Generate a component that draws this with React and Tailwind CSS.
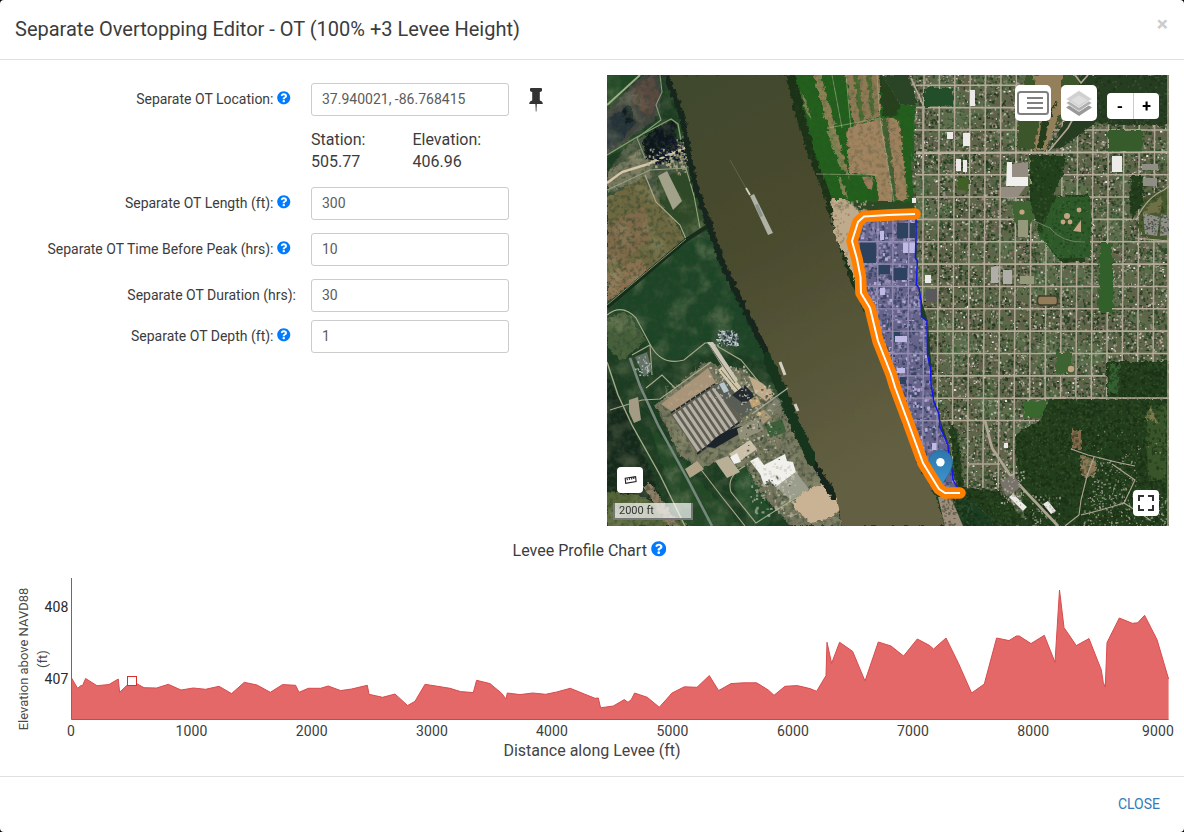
import React from "react";
import { FaQuestionCircle } from "react-icons/fa";

/* ---------- deterministic random numbers for the aerial imagery ---------- */
function makeRandom(seed) {
  let s = seed * 7919;
  return () => {
    s = (s * 1664525 + 1013904223) % 4294967296;
    return s / 4294967296;
  };
}

/* Scatter small rectangles inside a box and merge them into one path. */
function scatter(seed, count, x0, y0, w, h, min, max) {
  const rnd = makeRandom(seed);
  let d = "";
  for (let i = 0; i < count; i++) {
    const x = (x0 + rnd() * w).toFixed(1);
    const y = (y0 + rnd() * h).toFixed(1);
    const a = (min + rnd() * (max - min)).toFixed(1);
    const b = (min + rnd() * (max - min)).toFixed(1);
    d += `M${x} ${y}h${a}v${b}h-${a}z`;
  }
  return d;
}

const CITY = [
  ["#2b4425", 5600, 11, 1, 3.6],
  ["#43603a", 2600, 12, 1, 3],
  ["#625a50", 2600, 13, 1, 2.8],
  ["#978c80", 3600, 14, 0.8, 2.5],
  ["#bbb2a7", 2100, 15, 0.8, 2.2],
  ["#22321c", 2100, 16, 0.8, 2.4],
  ["#e9e7e4", 650, 17, 0.8, 2],
  ["#98584c", 160, 18, 0.8, 1.8],
];

const WOOD = [
  ["#152611", 2000, 31, 1, 3.5],
  ["#365629", 1600, 32, 1, 2.6],
  ["#4b6234", 600, 33, 1, 2],
];

const V_STREETS = Array.from({ length: 17 }, (_, i) => 923 + i * 15.4);
const H_STREETS = Array.from({ length: 16 }, (_, i) => 85.3 + i * 22.35);

const LEVEE = "M915 214L888 215L864 216.5L858 222L852 241L857 259L860.5 277L861 293L870 308L878 341L891 374L895 387L908 422L923 463L939 489L945 493L960 493";
const ZONE = "M915 214L888 215L864 216.5L852 241L861 293L870 308L878 341L891 374L895 387L908 422L923 463L941 492L957 489L956 482L953 475L950 463L949 445L942 432L939 415L934 405L932 378L928 355L928 322L922 317L921 300L917 285L918 268L915 258L916 236z";
const BLUE = "M916 218L916 236L915.3 258L917.5 261L917 268L916.5 285L919 288L921 300L921.5 317L927 321L927.5 355L930.5 368L931 384L934 402L939 414L940 427L948 445L949 462L952 470L953 480L957 487";
const RIVER = "M668 75L684 115L688 145L697 185L712 228L724 262L745 306L767 350L786 395L802 433L822 475L838 503L842 526L945 526L936 498L920 466L905 425L888 380L873 330L860 302L850 280L840 250L831 222L822 190L808 155L797 123L786 75z";

const PLANT_ROWS = Array.from({ length: 9 }, (_, i) => {
  const t = i / 8;
  const x = 674 + t * 39;
  const y = 414 - t * 26;
  return `M${x.toFixed(1)} ${y.toFixed(1)}l25 37`;
}).join("");

function AerialMap() {
  return (
    <svg className="block h-full w-full" viewBox="607 75 562 451">
      <defs>
        <filter id="rough" x="0" y="0" width="1" height="1">
          <feTurbulence type="fractalNoise" baseFrequency="0.2" numOctaves="3" seed="4" result="n" />
          <feDisplacementMap in="SourceGraphic" in2="n" scale="6" xChannelSelector="R" yChannelSelector="G" />
        </filter>
        <filter id="grain" x="0" y="0" width="1" height="1">
          <feTurbulence type="fractalNoise" baseFrequency="0.22" numOctaves="3" seed="9" />
          <feColorMatrix values="0 0 0 0 0.03  0 0 0 0 0.06  0 0 0 0 0.03  0 3 0 0 -1.35" />
        </filter>
        <filter id="patch" x="0" y="0" width="1" height="1">
          <feTurbulence type="fractalNoise" baseFrequency="0.045" numOctaves="4" seed="21" />
          <feColorMatrix values="0 0 0 0 0.4  0 0 0 0 0.4  0 0 0 0 0.23  0 3 0 0 -1.4" />
        </filter>
        <filter id="tint" x="0" y="0" width="1" height="1">
          <feTurbulence type="fractalNoise" baseFrequency="0.03" numOctaves="3" seed="3" />
          <feColorMatrix values="0 0 0 0 0.11  0 0 0 0 0.22  0 0 0 0 0.09  3.4 0 0 0 -1.6" />
        </filter>
        <filter id="soften"><feGaussianBlur stdDeviation="0.35" /></filter>
        <linearGradient id="river" x1="0" y1="0" x2="0.35" y2="1">
          <stop offset="0" stopColor="#3f482e" />
          <stop offset="0.45" stopColor="#4b4b2f" />
          <stop offset="1" stopColor="#625f42" />
        </linearGradient>
        <linearGradient id="pin" x1="0" y1="0" x2="0" y2="1">
          <stop offset="0" stopColor="#2e77ac" />
          <stop offset="1" stopColor="#3f97d2" />
        </linearGradient>
        <clipPath id="city"><path d="M882 75H1169V526H1000L958 489L949 445L934 402L928 322L917 285L916 214L914 205L911 160L915 106L900 104z" /></clipPath>
        <clipPath id="zone"><path d={ZONE} /></clipPath>
        <clipPath id="woods"><path d="M950 425L958 430L966 488L995 490L1016 475L1014 440L1024 420L1046 410L1060 398L1100 398L1108 362L1169 362V526H945z" /></clipPath>
        <clipPath id="park"><path d="M1030 155L1066 155L1063 175L1053 196L1090 195V238L1085 262H1060L1042 238L1030 205zM1080 75H1169V128H1115L1085 118zM1135 160H1169V240H1137L1130 200z" /></clipPath>
      </defs>

      {/* west bank */}
      <g filter="url(#rough)">
        <rect x="600" y="70" width="576" height="462" fill="#1d3d22" />
        <path d="M607 75H640L607 105z" fill="#1d4823" />
        <path d="M607 112L642 75H660L662 100L655 120L607 156z" fill="#42443f" />
        <path d="M632 88L652 75L660 95L650 118L634 105z" fill="#5a4940" />
        <path d="M607 118L630 105L636 122L618 146L607 150z" fill="#28323a" />
        <path d="M622 108L631 106L634 120L627 125z" fill="#111a23" />
        <path d="M607 172L630 142L645 135L690 145L700 200L650 200L607 190z" fill="#4b5942" />
        <path d="M607 172L640 150L652 165L650 178L607 192z" fill="#77785e" />
        <path d="M643 140L658 126L675 120L678 147L660 164L646 158z" fill="#10141f" />
        <path d="M607 198L642 178L660 202L686 238L640 285L607 305z" fill="#6d673f" />
        <path d="M607 225L645 205L650 240L625 262L607 265z" fill="#7f6b49" />
        <path d="M607 275L640 258L648 270L620 300L607 305z" fill="#8a704f" />
        <path d="M656 178L694 170L712 226L688 240L662 206z" fill="#2e4828" />
        <path d="M688 240L712 229L745 304L770 362L720 352L664 362L640 340L607 303z" fill="#1a4425" />
        <path d="M607 318L625 310L646 340L620 362L607 345z" fill="#46613a" />
        <path d="M655 405L704 362L745 370L778 400L800 440L835 500L842 526H790L750 480L722 460L700 470L680 455z" fill="#77775e" />
        <path d="M607 375L630 420L672 526H607z" fill="#13291a" />
        <path d="M650 425L690 470L740 526H680z" fill="#214a26" />
        <path d="M607 492L640 495L690 526H607z" fill="#566637" />
        <path d="M648 480L680 526H668L644 488z" fill="#8b7c63" />
        <path d="M736 468L745 466L772 513L768 526H755L735 495z" fill="#214e29" />
      </g>
      <rect x="607" y="75" width="235" height="451" filter="url(#patch)" opacity="0.3" />
      <rect x="607" y="75" width="235" height="451" filter="url(#grain)" opacity="0.6" />

      {/* tracks on the west bank */}
      <g fill="none" stroke="#a9aa8b" strokeWidth="1.1">
        <path d="M607 105L640 75" stroke="#9eb086" strokeWidth="2" />
        <path d="M607 155L637 137L671 119L678 124L681 140" stroke="#7fa06c" strokeWidth="1.4" />
        <path d="M607 183L622 172L645 165L690 146" stroke="#d5c8a8" strokeWidth="2.4" />
        <path d="M607 190L650 170L686 168L694 196L700 228" stroke="#93a37d" />
        <path d="M660 75L662 92L656 105L661 120L637 138L645 158" stroke="#88997a" />
        <path d="M645 175L656 202L680 225L686 239" />
        <path d="M708 226L686 240L607 307" stroke="#172c1b" strokeWidth="4" />
        <path d="M686 239L607 305" stroke="#8d9a72" strokeWidth="0.9" />
        <path d="M607 315Q622 303 636 318L651 346Q662 366 684 360L705 343L712 343L741 360L772 398" />
        <path d="M607 362L618 395L632 425L660 475L685 526" strokeWidth="1.4" />
        <path d="M630 358L640 386L658 425L687 478L712 526" stroke="#76877c" strokeWidth="2.6" />
        <path d="M610 410L642 400L660 399L711 362M646 388L662 375L675 388M632 355L650 345L652 375" />
        <path d="M696 463L722 497L745 526M745 466Q726 476 731 492L756 523L808 490" />
      </g>

      {/* smelter, warehouses and their yards */}
      <g>
        <path d="M661 404L708 368L716 383L674 413z" fill="#a89478" />
        <path d={scatter(50, 70, 664, 383, 44, 22, 0.8, 3)} fill="#c2b295" opacity="0.35" />
        <path d="M671 415L715 384L742 420L699 455z" fill="#615e52" />
        <path d={PLANT_ROWS} stroke="#b5b0a5" strokeWidth="3.2" />
        <path d="M671 413L715 384M697 454L741 421" stroke="#202b2d" strokeWidth="1.8" strokeDasharray="5 1" />
        <path d="M712 386L733 378L748 394L758 405L742 418z" fill="#585e56" />
        <path d="M707 342L713 342L738 380L733 384z" fill="#c9c6b6" />
        <path d="M718 370L724 365L742 388L735 393z" fill="#d2c7a9" />
        <path d="M709 345L735 383M721 370L738 390" stroke="#68675b" />
        <path d="M745 385L755 396L744 404L732 395z" fill="#232b31" />
        <path d="M719 384L724 382L729 391L724 393z" fill="#b7c6ca" />
        <path d="M707 447Q717 432 742 426L741 433L715 448z" fill="#1b242a" />
        <path d="M737 429L757 418L764 430L740 440z" fill="#928f79" />
        <path d="M729 454L750 440L757 449L737 463z" fill="#ccc0aa" />
        <path d="M730 457L737 453L741 462L734 464z" fill="#f0f0ee" />
        <path d="M750 461L758 457L764 465L785 454L787 461L793 462L796 472L776 487L770 481L764 485L760 474z" fill="#f0f0ec" />
        <path d="M776 487L796 472L809 489L791 500z" fill="#9b9e8d" />
        <path d="M749 376L762 383L775 394L766 401L755 393z" fill="#c0aa8a" />
        <path d="M756 414L764 410L771 417L763 424zM749 400L757 396L761 404L752 408z" fill="#c0a173" />
        <path d="M715 461L728 456L740 472L727 478z" fill="#b9af97" />
        <path d="M685 469L697 461L704 469L690 478z" fill="#b0a388" />
        <path d="M765 425L782 419L786 432L770 438z" fill="#3d603a" />
        <path d="M718 333L728 330L739 337L737 347L724 344z" fill="#70807e" />
        <path d="M635 357L647 352L652 371L644 377z" fill="#647268" />
        <path d="M629 400L638 397L641 420L634 423L629 412z" fill="#a39b83" />
        <path d="M658 176L667 171L682 201L673 210z" fill="#a2a18a" />
        <path d="M752 424L782 392L788 396L759 430z" fill="#8c8d7b" opacity="0.5" />
        <path d="M793 503L803 492L822 484L836 496L840 510L830 518L812 523L797 513z" fill="#c9b394" filter="url(#rough)" />
        <g filter="url(#soften)">
          <path d={scatter(51, 110, 750, 465, 45, 50, 1, 3)} fill="#cbc6b4" opacity="0.6" />
          <path d={scatter(52, 110, 740, 385, 35, 80, 0.8, 2.5)} fill="#d0c8b4" opacity="0.7" />
          <path d={scatter(53, 80, 745, 385, 45, 100, 0.8, 2.6)} fill="#2b3b30" opacity="0.7" />
          <path d={scatter(57, 60, 708, 365, 42, 35, 0.8, 2.4)} fill="#d0cab9" opacity="0.7" />
          <path d={scatter(54, 70, 716, 330, 21, 15, 0.8, 2.4)} fill="#c3cdcb" />
          <path d={scatter(58, 50, 716, 330, 22, 15, 0.8, 2.4)} fill="#25373a" />
          <path d={scatter(55, 90, 647, 148, 42, 18, 0.8, 3)} fill="#c0b99f" opacity="0.8" />
          <path d={scatter(56, 80, 655, 138, 30, 24, 0.8, 3)} fill="#11182a" />
          <path d={scatter(59, 30, 635, 355, 14, 20, 0.8, 2)} fill="#aebcb5" />
          <path d={scatter(60, 40, 676, 135, 10, 40, 0.8, 2.4)} fill="#b3a68a" opacity="0.7" />
        </g>
      </g>

      {/* farmland north of the levee */}
      <g filter="url(#rough)">
        <path d="M785 68H925V222H850L820 195z" fill="#23601f" />
        <path d="M844 68H880V116L854 125z" fill="#8f7a54" />
        <path d="M852 68L858 68L864 118L860 122zM866 68H869L875 114L871 116z" fill="#4b6d32" />
        <path d="M812 68L819 68L846 165L850 180L844 170L825 118z" fill="#8b8155" />
        <path d="M800 90L805 98L812 120L806 112zM826 130L831 130L845 170L841 170zM838 178L842 178L848 198L844 196z" fill="#7d8251" />
        <path d="M847 127L881 118L894 202L878 203L876 176L849 172z" fill="#a1845f" />
        <path d="M886 117L899 120L908 200L896 201z" fill="#9d805c" />
        <path d="M879 70H908L900 106L896 116L882 116z" fill="#27401f" />
        <path d="M881 117L887 117L897 202L893 202z" fill="#456234" />
        <path d="M862 178L874 177L872 190L866 186z" fill="#9a7c5b" />
        <path d="M850 202H914V214H856z" fill="#2f4a28" />
        <path d="M827 199L845 199L862 215L850 240L858 277L852 282L843 262L836 240z" fill="#bfab8b" />
        <path d="M785 75L796 75L813 150L831 195L834 235L848 262L862 303L857 306L843 275L830 226L810 175L795 130z" fill="#1c3019" />
      </g>
      <path d="M828 128L880 118L877 75M816 174L877 175M880 118L894 202M832 75L842 128M846 75L851 130" fill="none" stroke="#a9b388" strokeWidth="0.8" opacity="0.8" />
      <path d={scatter(61, 70, 830, 200, 18, 55, 0.8, 2.4)} fill="#8f7c62" opacity="0.7" />
      <path d={scatter(62, 26, 850, 200, 22, 12, 1, 3)} fill="#b9aa90" opacity="0.8" />
      <rect x="795" y="75" width="120" height="135" filter="url(#grain)" opacity="0.3" />

      {/* east bank town */}
      <g clipPath="url(#city)">
        <g filter="url(#soften)">
          <rect x="880" y="75" width="289" height="451" fill="#5f6549" />
          {CITY.map(([color, count, seed, min, max]) => (
            <path key={color} d={scatter(seed, count, 882, 73, 288, 455, min, max)} fill={color} />
          ))}
        </g>
        <rect x="916" y="75" width="253" height="451" filter="url(#tint)" opacity="0.4" />
        <g stroke="#b1a796" strokeWidth="1.5">
          {V_STREETS.map((x) => (
            <path key={x} d={`M${x + 1} 75L${x - 2} 526`} />
          ))}
        </g>
        <g stroke="#b5ab99" strokeWidth="1.6">
          {H_STREETS.map((y) => (
            <path key={y} d={`M916 ${y}H1169`} />
          ))}
        </g>
        {/* parks, open ground and groves */}
        <g filter="url(#rough)">
          <path d="M924 88H953V106H924z" fill="#23502a" />
          <path d="M896 106L915 106L914 160L906 165z" fill="#235e20" />
          <path d="M882 75L908 75L918 104L900 106L882 100z" fill="#2a4425" />
          <path d="M1018 118L1026 75H1080L1075 105L1052 130L1048 149H1018z" fill="#3e542b" />
          <path d="M1033 75H1062L1062 110L1046 150H1034L1042 105z" fill="#93805a" />
          <path d="M1058 100L1050 118L1043 148L1037 148L1042 120z" fill="#253c1e" />
          <path d="M1078 75H1169V125H1115L1095 122L1066 145L1052 149L1062 125L1080 104z" fill="#263d22" />
          <path d="M1108 130H1142V152H1108z" fill="#345c2b" />
          <path d="M1030 155L1066 155L1063 175L1053 196L1075 195H1090V238L1085 262H1060L1042 238L1030 205z" fill="#22401e" />
          <path d="M1056 197H1091V258H1060L1038 236z" fill="#2e5a29" />
          <path d="M1013 200L1031 202L1034 220L1022 236L1013 218z" fill="#3f6430" />
          <path d="M957 177H969V190H957z" fill="#3f6028" />
          <path d="M1132 175L1141 175L1144 200L1132 220L1129 200z" fill="#203d1c" />
          <path d="M1143 198L1169 186V238L1150 240L1137 228z" fill="#46582f" />
          <path d="M1148 205L1163 195L1160 212L1143 216z" fill="#707047" />
          <path d="M1100 243H1113V312H1098z" fill="#33602a" />
          <path d="M1056 352H1072V374H1056z" fill="#3c6430" />
          <path d="M1024 401H1046V418H1024z" fill="#38682d" />
          <path d="M1107 361H1169V398H1107z" fill="#243d1d" />
          <path d="M1110 364H1120L1118 394H1108z" fill="#356030" />
          <path d="M1049 399H1169V526H1026L1018 478L1015 435L1040 420z" fill="#213d1e" />
          <path d="M948 422L957 430L964 488L998 490L1030 526H945L961 500L955 478z" fill="#213d1e" />
          <path d="M1146 412L1166 405V482L1148 478z" fill="#385429" />
          <path d="M1072 430H1081V450H1072z" fill="#886a4f" />
          <path d="M1080 455L1097 460L1094 478L1082 476z" fill="#8f7958" />
          <path d="M1150 405L1160 424L1146 418z" fill="#7d7a4b" />
        </g>
      </g>
      <g clipPath="url(#woods)" opacity="0.5" filter="url(#soften)">
        {WOOD.map(([color, count, seed, min, max]) => (
          <path key={color} d={scatter(seed, count, 945, 362, 224, 164, min, max)} fill={color} />
        ))}
      </g>
      <g clipPath="url(#park)" opacity="0.35">
        <path d={scatter(34, 900, 1028, 75, 141, 190, 1, 3)} fill="#14250f" />
        <path d={scatter(35, 700, 1028, 75, 141, 190, 0.8, 2.2)} fill="#5c7a48" />
      </g>
      <g clipPath="url(#woods)">
        <path d={scatter(72, 130, 1092, 460, 45, 50, 0.8, 1.8)} fill="#a9a595" opacity="0.8" />
        <path d={scatter(73, 170, 1080, 494, 88, 32, 0.8, 1.9)} fill="#a9a595" opacity="0.8" />
        <path d={scatter(76, 24, 1092, 430, 70, 30, 0.8, 1.6)} fill="#a9a595" opacity="0.8" />
      </g>

      {/* school, ball fields, main roads */}
      <g fill="none" stroke="#aea593" strokeWidth="1.7">
        <path d="M916 153.5L1169 152" stroke="#bdb5a3" />
        <path d="M911 78L923 105L923 180" />
        <path d="M1048 152L1068 128L1081 104M1075 75L1081 83L1088 75" />
        <path d="M1032 220L1050 228Q1062 243 1085 242" stroke="#738063" strokeWidth="1" />
        <path d="M1136 220Q1147 197 1164 190L1169 186M1135 238L1169 241" strokeWidth="1.2" />
        <path d="M985 421L992 448L1010 475L1058 526" strokeWidth="2.8" />
        <path d="M1071 449L1088 455L1116 462L1135 466M1094 457L1087 476L1081 500L1079 515L1065 526M1081 515L1101 510L1124 503L1135 480L1112 464M1124 503L1140 513L1150 520" strokeWidth="1.1" />
        <path d="M1046 398H1169M1168 75V526M968 464H1000" strokeWidth="1.4" />
      </g>
      <path d="M1007 162H1012V177H1028V186H1006z" fill="#f0f0ee" />
      <path d="M1012 164L1028 162V177H1012zM1001 187L1026 186L1018 197L1001 197z" fill="#958d82" />
      <g fill="#c4a583">
        <circle cx="1022" cy="212" r="2.6" /><circle cx="1067" cy="216" r="3" /><circle cx="1063" cy="222" r="2.4" /><circle cx="1070" cy="222" r="2.4" /><circle cx="1079" cy="210" r="2.4" /><path d="M1073 231L1081 220V232z" /><circle cx="1071" cy="369" r="3.2" />
      </g>
      <rect x="1037.5" y="296" width="20" height="9" rx="3" fill="#937c57" stroke="#413f2e" strokeWidth="1.5" />
      <path d="M1018 220H1028V237H1018zM1020 276H1034V284H1020z" fill="#95987b" />
      <path d="M991 267L999 266L998 283L991 283zM1003 270H1012V284H1003z" fill="#b0aea9" />
      <path d="M926 289H937V302H926z" fill="#59585a" />
      <g fill="#ecebe9">
        <path d="M947 132H953V139H947zM963 133H970V146H963zM956 159H961V171H956zM963 160H967V172H963zM925 275H931V283H925zM1004 443H1008V448H1004zM970 90H975V106H970zM912 198H916V203H912zM1112 156H1122V172H1112z" />
        <path d="M1009 497L1013 494L1027 507L1023 511zM1043 504L1048 501L1056 511L1051 514z" />
      </g>
      <path d="M1000 481L1014 475L1021 487L1006 496z" fill="#77736a" />
      <path d={scatter(77, 60, 1000, 470, 24, 34, 0.8, 2.2)} fill="#bbb5a9" opacity="0.8" />
      <path d={scatter(78, 50, 1032, 495, 28, 28, 0.8, 2.2)} fill="#bbb5a9" opacity="0.7" />
      <path d="M1143 213L1160 217L1157 236L1145 234zM1161 214L1169 216V235L1160 236zM1142 164H1158V170H1142zM1143 178H1157V186H1143z" fill="#908f85" />
      <path d={scatter(75, 90, 1143, 213, 25, 22, 0.8, 1.8)} fill="#4b5550" />

      {/* river, bank vegetation and vessels */}
      <path d={RIVER} fill="url(#river)" filter="url(#rough)" />
      <path d="M666 75L682 115L687 145L695 185L710 228L722 262L743 306L765 350L784 395L800 433L818 470L836 500" fill="none" stroke="#15281b" strokeWidth="6" filter="url(#rough)" />
      <path d="M764 352L783 393L797 428L815 466" fill="none" stroke="#19341e" strokeWidth="10" filter="url(#rough)" />
      <path d="M938 497L945 497L952 500L963 526L945 526z" fill="#9c8e7b" />
      <path d={scatter(81, 70, 941, 498, 14, 28, 0.8, 2)} fill="#635d4b" />
      <path d="M730 160L747 190" stroke="#74745a" strokeWidth="1" opacity="0.6" />
      <path d="M746 188L750 195" stroke="#d4d2c0" strokeWidth="1.8" />
      <path d="M750 196L754 194L773 233L768 235z" fill="#b0b2a4" />
      <path d="M755 205L758 204L763 216L760 217z" fill="#8a938e" />
      <path d="M780 362L785 375M795 404L798 411" stroke="#d0cfc2" strokeWidth="3" />
      <path d="M752 414L788 388" stroke="#a5a596" strokeWidth="1.5" />

      {/* leveed area */}
      <g clipPath="url(#zone)">
        <rect x="848" y="210" width="112" height="285" fill="#66648a" />
        <g filter="url(#soften)">
          <path d={scatter(91, 900, 848, 210, 112, 285, 1, 4)} fill="#404c6a" />
          <path d={scatter(92, 900, 848, 210, 112, 285, 1, 4)} fill="#817ca6" />
          <path d={scatter(93, 700, 848, 210, 112, 285, 1, 3.5)} fill="#9890b8" />
          <path d={scatter(95, 700, 848, 210, 112, 285, 0.8, 3)} fill="#3a4362" />
          <path d={scatter(94, 260, 848, 210, 112, 285, 1, 3.5)} fill="#b3acd8" />
        </g>
        <path d="M860 242H876V263H860zM897 223H915V238H897zM878 265H890V274H878zM893 268H907V280H893zM894 330H900V340H894zM900 377H906V384H900z" fill="#2d425e" />
        <path d="M903 242H915V253H903zM880 288H885V295H880zM895 336H907V342H895zM897 368H905V373H897zM880 231H884V240H880zM932 443H937V450H932z" fill="#bfbae6" />
        <g stroke="#938cb1" strokeWidth="1.3">
          <path d="M878 210L877 495M893 210L892 495M909 210L907 495M924 310L922 495M937 400V495" />
          {H_STREETS.slice(6, 18).map((y) => (
            <path key={y} d={`M850 ${y}H960`} />
          ))}
        </g>
      </g>
      <path d={BLUE} fill="none" stroke="#1414f5" strokeWidth="1.4" />

      {/* location marker */}
      <path d="M940.5 489C939 482 928.5 472 928.5 462.3A12 12 0 0 1 952.5 462.3C952.5 472 942 482 940.5 489z" fill="url(#pin)" stroke="#2c6d9c" strokeWidth="0.8" />
      <circle cx="940.4" cy="462.3" r="4.2" fill="#fff" />

      {/* levee centre line */}
      <path d={LEVEE} fill="none" stroke="#ff8000" strokeWidth="11.6" strokeLinecap="round" strokeLinejoin="round" />
      <path d={LEVEE} fill="none" stroke="#fff" strokeWidth="2" strokeLinejoin="round" />
    </svg>
  );
}

/* ---------- levee profile ---------- */
const PROFILE = "71.5,678 77.6,688.3 81,685.5 82.5,685.7 85.6,678.5 97,685.7 109,684.5 118.3,679 119.6,692.3 127.3,685 136.5,683.5 144,687.7 156.6,688 168.3,684.3 181,690 193.3,688 205.6,689.3 219,686.3 231.6,693.6 244.3,682.3 257,685 270.3,692.3 282.6,684.6 295.6,685.3 299,692.3 308.3,688.3 320.6,688.3 328.3,686 340.6,690.6 351.6,689 367.3,685.3 369,694.3 382.6,697.3 395,694 407.6,705.5 415,701.3 425,684.3 450,688.3 460.6,691.6 473.3,692.6 476.6,680.3 490,683.6 501.6,693.3 506,699 507.3,693 520,694.6 532.6,693 545.6,694.3 556.6,692 570.3,688.3 585,694.3 595,698.3 598.3,698 600.6,707.8 613.3,706 624.3,699.6 628,702.3 631.3,699.6 634.6,693 647.3,697.3 659.3,707.3 672,693 684.3,686.8 697,687.3 709.3,675.6 718.6,690.6 731,683.6 744,682.8 756.6,682.8 768.3,690 774,695.3 785,686.3 797.3,685.6 810,688.6 816.6,691.3 826,675.6 827,642.3 831.6,663.3 839.6,642.3 852.6,651.3 865,681 878.3,642 891,646 903.6,656 917.3,639 929.3,645.3 933.6,649 946,638 958.6,663.6 971.6,693 984.3,684 996.6,638 1009,640.6 1016.3,636 1019.3,636 1031,643.6 1044.3,635.3 1055,662.3 1059.5,590 1064,627.6 1076.3,645.6 1089,638.6 1101.3,670 1103.3,682.6 1105.3,687 1107,642.6 1119.3,618 1132.3,623.3 1137.6,622.8 1144.6,615.3 1157,639.6 1168.6,679";

const X_TICKS = [
  [71, "0"], [191.5, "1000"], [311.7, "2000"], [432, "3000"], [552, "4000"],
  [672.5, "5000"], [793, "6000"], [913, "7000"], [1033.3, "8000"], [1158, "9000"],
];

function ProfileChart() {
  return (
    <svg className="block h-[208px] w-[1184px] shrink-0 font-['Roboto',sans-serif]" viewBox="0 568 1184 208">
      <polygon points={`71.5,719.5 ${PROFILE} 1168.6,719.5`} fill="#e46868" />
      <polyline points={PROFILE} fill="none" stroke="#d84c4e" strokeWidth="1" />
      <path d="M71.5 578V719" stroke="#6b6b6b" />
      <path d="M71.5 679V719.5H1168.6" fill="none" stroke="#c9484b" />
      <rect x="127.5" y="676.5" width="9" height="9" fill="#fff" stroke="#d9302c" />
      <g fill="#3c3c3c" fontSize="14" letterSpacing="0.1">
        <text x="68.5" y="612" textAnchor="end" fill="#2a2a2a">408</text>
        <text x="68.5" y="684" textAnchor="end" fill="#2a2a2a">407</text>
        {X_TICKS.map(([x, label]) => (
          <text key={label} x={x} y="736" textAnchor="middle">{label}</text>
        ))}
      </g>
      <text x="592" y="756" textAnchor="middle" fontSize="16" fill="#444">Distance along Levee (ft)</text>
      <g fill="#4a4a4a" fontSize="13" textAnchor="middle">
        <text transform="translate(28 659) rotate(-90)">Elevation above NAVD88</text>
        <text transform="translate(46.5 659) rotate(-90)">(ft)</text>
      </g>
    </svg>
  );
}

/* ---------- form ---------- */
function Field({ label, value, help = true, className = "" }) {
  return (
    <div className={`flex h-[33px] items-center ${className}`}>
      <label className="flex w-[296px] items-center justify-end whitespace-nowrap pb-0.5 text-sm">
        {label}
        {help && <FaQuestionCircle className="-mt-px ml-[3.5px] mr-[5.5px] size-[13.5px] text-[#007bff]" />}
      </label>
      <input
        className="ml-[15px] h-[33px] w-[198px] rounded-[3px] border border-[#ccc] bg-white px-2.5 pb-0.5 text-sm text-[#5c5c5c] outline-none"
        defaultValue={value}
      />
      {label.includes("Location") && (
        <svg className="ml-[19px] h-6 w-4" viewBox="0 0 16 24" fill="#333">
          <path d="M2 0.9Q2 0 3 0H13Q14 0 14 0.9V2.6Q14 3.8 11.8 4.1V12.4Q14.8 13.2 14.8 16H1.2Q1.2 13.2 4.2 12.4V4.1Q2 3.8 2 2.6z" />
          <path d="M7.4 16H8.8L8.4 23.5H7.8z" />
        </svg>
      )}
    </div>
  );
}

export default function App() {
  return (
    <div className="h-[832px] w-[1184px] overflow-hidden bg-black font-['Roboto',sans-serif] text-[#3c3c3c]">
      <div className="flex h-full flex-col overflow-hidden rounded-[4px] bg-white">
        <header className="flex h-[60px] shrink-0 items-center justify-between border-b border-[#e0e0e0] px-[15px] pb-0.5">
          <h1 className="text-xl font-normal">Separate Overtopping Editor - OT (100% +3 Levee Height)</h1>
          <button className="mb-2 pr-px text-[21px] font-bold leading-none text-[#ccc]">×</button>
        </header>

        <main className="flex h-[466px] shrink-0 pt-[15px]">
          <form className="w-[607px] pt-2">
            <Field label="Separate OT Location:" value="37.940021, -86.768415" />
            <div className="ml-[311px] mt-[13px] flex h-[58px] text-base leading-[22px]">
              <div className="w-[101.5px]">Station:<br />505.77</div>
              <div>Elevation:<br />406.96</div>
            </div>
            <Field label="Separate OT Length (ft):" value="300" />
            <Field label="Separate OT Time Before Peak (hrs):" value="10" className="mt-[13px]" />
            <Field label="Separate OT Duration (hrs):" value="30" help={false} className="mt-[13px]" />
            <Field label="Separate OT Depth (ft):" value="1" className="mt-2" />
          </form>

          <section className="relative h-[451px] w-[562px] overflow-hidden bg-[#2a3d24]">
            <AerialMap />
            <button className="absolute left-[408px] top-2.5 flex size-9 items-center justify-center rounded-[5px] bg-white">
              <svg className="h-6 w-8" viewBox="0 0 32 24" fill="none" stroke="#808080" strokeWidth="2">
                <rect x="1" y="1" width="30" height="22" rx="2.5" />
                <path d="M10 7H26M10 12H26M10 17H26" />
              </svg>
            </button>
            <button className="absolute left-[454px] top-2.5 flex size-9 items-center justify-center rounded-[5px] bg-white">
              <svg className="size-[26px]" viewBox="0 0 26 26">
                <path d="M0 17.5L13 26L26 17.5L22.5 15.2L13 21.3L3.5 15.2z" fill="#999" />
                <path d="M0 13L13 21.5L26 13L22.5 10.7L13 17L3.5 10.7z" fill="#b0b0b0" stroke="#fff" strokeWidth="0.6" />
                <path d="M13 0.5L26 9L13 17.5L0 9z" fill="#d0d0d0" stroke="#fff" strokeWidth="0.5" />
                <path d="M13 5.3L21 10L13 15.5L5 10z" fill="#dedede" />
              </svg>
            </button>
            <div className="absolute left-[500px] top-[18px] flex h-[26px] w-[52px] overflow-hidden rounded bg-white text-base font-bold leading-[27px] text-black">
              <button className="w-[27px] border-r border-[#ccc]">-</button>
              <button className="w-[25px]">+</button>
            </div>
            <button className="absolute left-2.5 top-[392px] flex size-[26px] items-center justify-center rounded bg-white">
              <svg className="h-2.5 w-[13px]" viewBox="0 0 13 10" fill="none" stroke="#222" strokeWidth="1.1">
                <path d="M1.2 3.3L11.6 1.6L12.1 6.5L1.7 8.3zM3.3 3V5.2M5.5 2.7V4.7M7.7 2.3V4.5M9.8 2V4" />
              </svg>
            </button>
            <div className="absolute left-1.5 top-[428px] h-[17px] w-20 border-2 border-t-0 border-[#777] bg-white/70 pl-1 text-[11px] leading-[15px] text-[#333]">2000 ft</div>
            <button className="absolute left-[526px] top-[415px] flex size-[26px] items-center justify-center rounded bg-white">
              <svg className="size-4" viewBox="0 0 16 16" fill="none" stroke="#333" strokeWidth="2">
                <path d="M1 6V1H6M10 1H15V6M15 10V15H10M6 15H1V10" />
              </svg>
            </button>
          </section>
        </main>

        <div className="flex h-[42px] shrink-0 justify-center pt-3.5 text-base leading-[22px]">
          <span className="flex pr-[5px]">
            Levee Profile Chart
            <FaQuestionCircle className="ml-1 mt-px size-[15.5px] text-[#007bff]" />
          </span>
        </div>
        <ProfileChart />

        <footer className="flex h-14 shrink-0 items-center justify-end border-t border-[#e0e0e0] pb-0.5 pr-6 text-sm">
          <button className="text-[#337ab7]">CLOSE</button>
        </footer>
      </div>
    </div>
  );
}
